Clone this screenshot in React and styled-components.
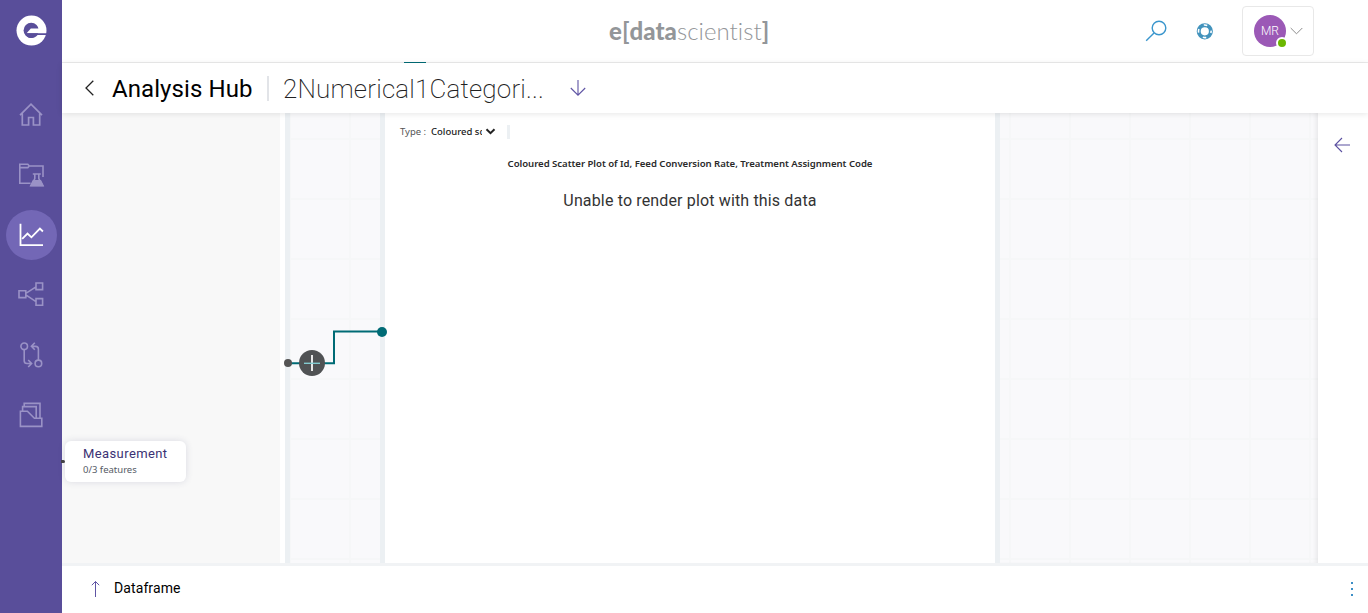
import React from 'react';
import styled, { createGlobalStyle, css } from 'styled-components';

const Global = createGlobalStyle`
  *, *::before, *::after { box-sizing: border-box; }
  html, body, #root { margin: 0; height: 100%; }
  body { overflow: hidden; background: #fff; font-family: Roboto, 'Liberation Sans', sans-serif; color: #000; }
`;

const gridPaper = css`
  background-color: #f9f9fb;
  background-image:
    linear-gradient(90deg, #f6f7f8 2px, transparent 2px),
    linear-gradient(#f6f7f8 2px, transparent 2px);
  background-size: 60px 60px;
`;

const Shell = styled.div`display: flex; height: 613px; width: 1368px; overflow: hidden;`;

const Sidebar = styled.nav`
  flex: 0 0 62px;
  display: flex;
  flex-direction: column;
  align-items: center;
  background: #594e9a;
  padding-top: 15px;
`;
const Brand = styled.div`height: 70px; svg { display: block; }`;
const NavItem = styled.a`
  display: flex;
  align-items: center;
  justify-content: center;
  width: 51px;
  height: 50px;
  margin: 5px 0;
  padding: 0 ${p => p.$nudge ?? 1}px ${p => p.$lift ?? 0}px 0;
  border-radius: 50%;
  color: ${p => (p.$active ? '#fff' : '#9a92c6')};
  background: ${p => (p.$active ? '#7367b6' : 'transparent')};
  svg { display: block; }
`;

const Main = styled.div`flex: 1; min-width: 0; display: flex; flex-direction: column;`;

const TopBar = styled.header`
  display: grid;
  grid-template-columns: 1fr auto 1fr;
  align-items: center;
  height: 63px;
  border-bottom: 1px solid #ececec;
`;
const Wordmark = styled.div`
  grid-column: 2;
  width: 160px;
  margin-right: 52px;
  color: #939699;
  font: 300 24px/32px Lato, sans-serif;
  letter-spacing: 0.05px;
  white-space: nowrap;
  b { font-weight: 900; }
  i { font-style: normal; font-weight: 700; }
`;
const TopActions = styled.div`
  display: flex;
  align-items: center;
  justify-content: flex-end;
  padding-right: 54px;
  svg { display: block; }
`;
const SearchButton = styled.span`margin-right: 29px;`;
const HelpButton = styled.span`margin-right: 29px;`;
const Account = styled.div`
  display: flex;
  align-items: center;
  width: 72px;
  height: 50px;
  padding-left: 11px;
  border: 1px solid #e8e8e8;
  border-radius: 4px;
`;
const Avatar = styled.div`
  position: relative;
  width: 32px;
  height: 32px;
  margin-right: 4px;
  border-radius: 50%;
  background: #9b59b6;
  color: #fff;
  font: 300 12px/32px Roboto, sans-serif;
  text-align: center;
`;
const Presence = styled.span`
  position: absolute;
  right: -2px;
  bottom: -2px;
  width: 12px;
  height: 12px;
  border: 2px solid #fff;
  border-radius: 50%;
  background: #6bb700;
`;

const TitleBar = styled.div`
  z-index: 2;
  display: flex;
  align-items: center;
  height: 50px;
  padding-left: 22px;
  background: #fff;
  box-shadow: 0 1px 6px rgba(0, 0, 0, 0.1);
  svg { display: block; }
`;
const TitleTab = styled.span`
  position: absolute;
  top: 62px;
  left: 404px;
  width: 22px;
  height: 1px;
  background: #006b75;
`;
const Title = styled.h1`
  width: 157px;
  margin: 0 0 0 17px;
  border-right: 2px solid #e2e4e8;
  font: 400 24px/27px Roboto, sans-serif;
  height: 25px;
  letter-spacing: 0.08px;
  white-space: nowrap;
`;
const Subtitle = styled.h2`
  width: 263px;
  margin: 2px 23px 0 14px;
  color: #222;
  font: 200 26px/34px Roboto, sans-serif;
  letter-spacing: 0.17px;
  white-space: nowrap;
`;

const Workspace = styled.main`position: relative; flex: 1; min-height: 0; display: flex;`;
const SourcePane = styled.section`flex: 0 0 223px; background: #f8f8f8; border-right: 5px solid #fff;`;
const LinkPane = styled.section`
  flex: 0 0 100px;
  border: solid #ecf0f3;
  border-width: 0 5px;
  ${gridPaper}
  background-position: 59px 25px;
`;
const PlotPane = styled.section`flex: 0 0 610px; background: #fff;`;
const EmptyPane = styled.section`
  flex: 1;
  border-left: 5px solid #ecf0f3;
  ${gridPaper}
  background-position: 9px 25px;
  box-shadow: inset -4px 0 4px -2px rgba(0, 0, 0, 0.07);
`;
const SidePanel = styled.aside`flex: 0 0 50px; padding: 24px 0 0 16px; background: #fff; svg { display: block; }`;

const PlotTools = styled.div`
  display: flex;
  align-items: center;
  height: 36px;
  padding: 2px 0 0 15px;
  font: 400 9.5px/14px 'Noto Sans', sans-serif;
`;
const ToolLabel = styled.span`width: 31px; color: #555; white-space: nowrap;`;
const TypeValue = styled.span`
  width: 51px;
  overflow: hidden;
  color: #222;
  font-weight: 500;
  white-space: nowrap;
`;
const Separator = styled.span`width: 3px; height: 14px; margin-left: 11px; background: #ecf0f3;`;
const PlotTitle = styled.h3`
  margin: 8px 0 0;
  color: #2a2a2a;
  font: 600 9.6px/14px 'Noto Sans', sans-serif;
  letter-spacing: -0.04px;
  text-align: center;
  white-space: nowrap;
`;
const PlotMessage = styled.p`
  margin: 18px 0 0;
  color: #333;
  font: 400 16px/24px Roboto, sans-serif;
  letter-spacing: 0.15px;
  text-align: center;
`;

const FeatureNode = styled.div`
  position: absolute;
  left: 3px;
  top: 328px;
  width: 121px;
  height: 41px;
  padding: 4px 0 0 18px;
  border-radius: 6px;
  background: #fff;
  box-shadow: 0 0 7px rgba(60, 70, 110, 0.16);
  white-space: nowrap;
`;
const NodeName = styled.div`color: #3b3274; font: 400 13px/18px Roboto, sans-serif; letter-spacing: 0.4px;`;
const NodeMeta = styled.div`color: #555a66; font: 400 9.5px/14px 'Noto Sans', sans-serif;`;
const NodePort = styled.span`
  position: absolute;
  left: -1px;
  top: 347px;
  width: 4px;
  height: 3px;
  border-radius: 0 2px 2px 0;
  background: #444;
`;
const Connector = styled.svg`position: absolute; left: 218px; top: 208px;`;

const BottomBar = styled.footer`
  display: flex;
  align-items: center;
  height: 50px;
  padding: 0 14px 2px 28px;
  border-top: 3px solid #f1f3f5;
  background: #fff;
  font: 400 14px/20px Roboto, sans-serif;
  letter-spacing: 0.1px;
  svg { display: block; }
`;
const DrawerName = styled.span`flex: 1; margin-left: 13px; padding-bottom: 1px;`;

const HomeIcon = () => (
  <svg width="26" height="26" viewBox="0 0 26 26" fill="none" stroke="currentColor" strokeWidth="1.7">
    <path d="M2 13.2 13 2.2 24 13.2M4.3 11.5V23h6.3v-7.5h4.8V23h6.3V11.5" />
  </svg>
);
const LabFolderIcon = () => (
  <svg width="28" height="28" viewBox="0 0 28 28" fill="none" stroke="currentColor" strokeWidth="1.6">
    <path d="M13.5 22.2H2.8V3.2h8l1.5 1.8H26v11M2.8 6.6h8L12.3 5M15.8 13h8M17.8 13v4.5L14.5 24.5h11L21.8 17.5V13" />
    <path d="M16.3 19.7h7.2l2.5 5.1H13.8z" fill="currentColor" />
  </svg>
);
const ChartIcon = () => (
  <svg width="26" height="26" viewBox="0 0 26 26" fill="none" stroke="currentColor" strokeWidth="1.8">
    <path d="M2.5 1.8v21.4H25M4.2 16.8l5.3-5.3 3.9 3.8 8.5-8.8 3 3" />
  </svg>
);
const ShareIcon = () => (
  <svg width="26" height="26" viewBox="0 0 26 26" fill="none" stroke="currentColor" strokeWidth="1.6">
    <path d="M1 9.8h6.8v6.8H1zM18 2h6.6v6.6H18zM18 17.6h6.6v6.6H18zM7.8 12.4 18 5.8M7.8 13.8 18 20.6" />
  </svg>
);
const PullIcon = () => (
  <svg width="26" height="28" viewBox="0 0 26 28" fill="none" stroke="currentColor" strokeWidth="1.6">
    <circle cx="6.2" cy="5.3" r="3.3" />
    <circle cx="20.4" cy="22.4" r="3.3" />
    <path d="M6.2 8.7v11q0 2.8 2.8 2.8h4M10.2 19l3.4 3.5-3.4 3.5M20.4 19V8.2q0-2.8-2.8-2.8h-4M16.8 1.8l-3.4 3.5 3.4 3.5" />
  </svg>
);
const ArchiveIcon = () => (
  <svg width="26" height="28" viewBox="0 0 26 28" fill="none" stroke="currentColor" strokeWidth="1.6">
    <path d="M2.4 10.2V25.4h21.4v-8.2h-7.4l-7-7zM4.6 10V5.6h13.6v11.4M6.2 5.4V2.4H22v14.6" />
  </svg>
);

const navItems = [
  { id: 'home', Icon: HomeIcon },
  { id: 'lab', Icon: LabFolderIcon },
  { id: 'analysis', Icon: ChartIcon, active: true },
  { id: 'share', Icon: ShareIcon, lift: 2, nudge: 0 },
  { id: 'pull', Icon: PullIcon, lift: 1 },
  { id: 'archive', Icon: ArchiveIcon, lift: 1 },
];

export default function App() {
  return (
    <>
      <Global />
      <Shell>
        <Sidebar>
          <Brand>
            <svg width="31" height="31" viewBox="0 0 31 31">
              <circle cx="15.5" cy="15.6" r="15" fill="#fff" />
              <circle cx="15.2" cy="15.4" r="7.6" fill="#594e9a" />
              <path d="M10.6 18.2 14.8 13.6H30V18.2z" fill="#fff" />
              <path d="M14 20H28V24H20z" fill="#fff" />
              <path d="M9 18.2H31V19.9H21.6C20 21.7 18 23 15.2 23 12.4 23 10 21 9 18.2z" fill="#594e9a" />
            </svg>
          </Brand>
          {navItems.map(({ id, Icon, active, lift, nudge }) => (
            <NavItem key={id} $active={active} $lift={lift} $nudge={nudge}><Icon /></NavItem>
          ))}
        </Sidebar>
        <Main>
          <TopBar>
            <Wordmark><b>e</b><i>[</i><b>data</b>scientist<i>]</i></Wordmark>
            <TopActions>
              <SearchButton>
                <svg width="22" height="22" viewBox="0 0 22 22" fill="none" stroke="#3a96cd" strokeWidth="1.4">
                  <circle cx="14" cy="8" r="6.8" /><path d="M9 13 1.2 20.8" />
                </svg>
              </SearchButton>
              <HelpButton>
                <svg width="17" height="17" viewBox="0 0 17 17" fill="none">
                  <circle cx="8.8" cy="8.3" r="6.1" stroke="#4293bd" strokeWidth="4" />
                  <circle cx="8.8" cy="8.3" r="6.3" stroke="#fff" strokeWidth="1.6" strokeDasharray="3.6 6.296" strokeDashoffset="1.8" />
                </svg>
              </HelpButton>
              <Account>
                <Avatar>MR<Presence /></Avatar>
                <svg width="13" height="8" viewBox="0 0 13 8" fill="none" stroke="#8c8c8c"><path d="M.7 1l5.8 5.8L12.3 1" /></svg>
              </Account>
            </TopActions>
          </TopBar>
          <TitleTab />
          <TitleBar>
            <svg width="11" height="16" viewBox="0 0 11 16" fill="none" stroke="#222" strokeWidth="1.3"><path d="M9.3.8 2 8l7.3 7.2" /></svg>
            <Title>Analysis Hub</Title>
            <Subtitle>2Numerical1Categori...</Subtitle>
            <svg width="18" height="18" viewBox="0 0 18 18" fill="none" stroke="#5f54a4" strokeWidth="1.1"><path d="M9 1v15M1.8 9 9 16.2 16.2 9" /></svg>
          </TitleBar>
          <Workspace>
            <SourcePane />
            <LinkPane />
            <PlotPane>
              <PlotTools>
                <ToolLabel>Type :</ToolLabel>
                <TypeValue>Coloured scatter</TypeValue>
                <svg width="14" height="8" viewBox="0 0 14 8" fill="none" stroke="#222" strokeWidth="2"><path d="M4.5 1.2 8.5 5.2 12.5 1.2" /></svg>
                <Separator />
              </PlotTools>
              <PlotTitle>Coloured Scatter Plot of Id, Feed Conversion Rate, Treatment Assignment Code</PlotTitle>
              <PlotMessage>Unable to render plot with this data</PlotMessage>
            </PlotPane>
            <EmptyPane />
            <SidePanel>
              <svg width="17" height="16" viewBox="0 0 17 16" fill="none" stroke="#5b50a0" strokeWidth="1.1"><path d="M16 8H1M8 1 1 8l7 7" /></svg>
            </SidePanel>
            <Connector width="112" height="60" viewBox="0 0 112 60" fill="none">
              <path d="M8 42.3H54V10.5H98" stroke="#006b75" strokeWidth="2" />
              <circle cx="8" cy="42" r="4" fill="#555" />
              <circle cx="32" cy="42" r="13" fill="#505254" />
              <path d="M32 34v16" stroke="#e8e8e8" strokeWidth="2" />
              <path d="M24 42.3h16" stroke="#83cbd0" strokeWidth="1.4" />
              <circle cx="102" cy="11" r="5" fill="#006b75" />
            </Connector>
            <NodePort />
            <FeatureNode>
              <NodeName>Measurement</NodeName>
              <NodeMeta>0/3 features</NodeMeta>
            </FeatureNode>
          </Workspace>
          <BottomBar>
            <svg width="11" height="17" viewBox="0 0 11 17" fill="none" stroke="#5f54a4"><path d="M5.5 17V1.5M1.8 5.2 5.5 1.5 9.2 5.2" /></svg>
            <DrawerName>Dataframe</DrawerName>
            <svg width="4" height="14" viewBox="0 0 4 14" fill="#3b8ec6"><path d="M1 0h2v2H1zM1 6h2v2H1zM1 12h2v2H1z" /></svg>
          </BottomBar>
        </Main>
      </Shell>
    </>
  );
}
